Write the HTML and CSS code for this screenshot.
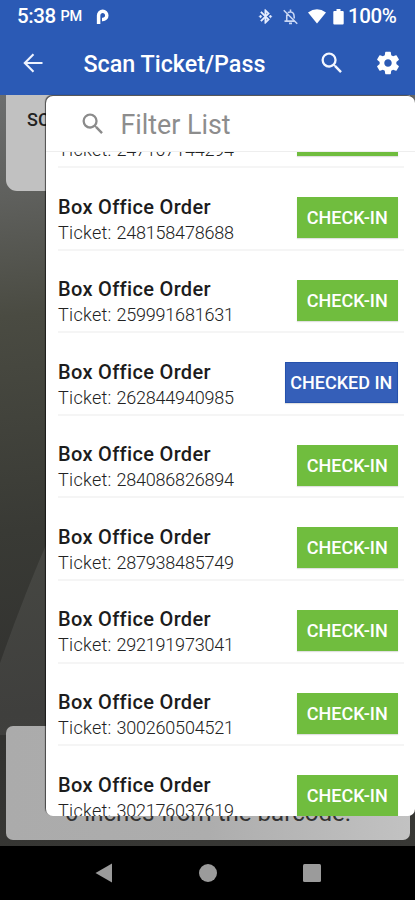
FILE: index.html
```html
<!DOCTYPE html>
<html lang="en">
<head>
<meta charset="utf-8">
<title>Scan Ticket/Pass</title>
<link rel="stylesheet" href="styles.css">
</head>
<body>
<div class="phone">
  <header class="top">
    <div class="status">
      <span class="time">5:38</span><span class="pm">PM</span>
      <svg class="parking" width="13" height="16" viewBox="0 0 13 16"><path d="M2.600 15V6.400a4.100 4.100 0 1 1 4.100 4.100H6" fill="none" stroke="#fff" stroke-width="3.500"/></svg>
      <span class="spacer"></span>
      <svg class="bt" width="17" height="17" viewBox="0 0 24 24" fill="#e6edff" stroke="#e6edff" stroke-width=".7"><path d="M17.710 7.710 12 2h-1v7.590L6.410 5 5 6.410 10.590 12 5 17.590 6.410 19 11 14.410V22h1l5.710-5.710-4.300-4.290 4.300-4.290zM13 5.830l1.880 1.880L13 9.590V5.830zm1.880 10.460L13 18.170v-3.760l1.880 1.880zM19 10l2 2-2 2-2-2zM5 10l2 2-2 2-2-2z"/></svg>
      <svg class="bell" width="19" height="18" viewBox="0 0 24 24" fill="none" stroke="#c9d7f5" stroke-width="2.100"><path d="M3 3l18 18M7 8.500V17M4 17.500h13M8.500 6.200C10 5 14 4.500 15.800 7.200 17 9 16.800 11 17 14M12 2v3M10 20.500h4"/></svg>
      <svg class="wifi" width="18" height="15" viewBox="0 0 18 15"><path d="M0 3.600Q9-3 18 3.600L9 14.500z" fill="#fff"/></svg>
      <svg class="battery" width="11" height="16" viewBox="0 0 11 16"><path d="M3.500 0h4v2h2.200q1 0 1 1v11.500q0 1-1 1H1.300q-1 0-1-1V3q0-1 1-1h2.200z" fill="#fff"/></svg>
      <span class="percent">100%</span>
    </div>
    <div class="appbar">
      <svg class="back" width="20" height="20" viewBox="0 0 20 20" fill="none" stroke="#eef3ff" stroke-width="2.100"><path d="M19.500 10H2M10.500 1.300 1.800 10l8.700 8.700"/></svg>
      <h1>Scan Ticket/Pass</h1>
      <svg class="find" width="28" height="28" viewBox="0 0 24 24" fill="#f4f7ff"><path d="M15.500 14h-.79l-.28-.27A6.471 6.471 0 0 0 16 9.500 6.500 6.500 0 1 0 9.500 16c1.610 0 3.090-.59 4.230-1.570l.27.28v.79l5 4.990L20.490 19l-4.990-5zm-6 0C7.010 14 5 11.990 5 9.500S7.010 5 9.500 5 14 7.010 14 9.500 11.990 14 9.500 14z"/></svg>
      <svg class="gear" width="28" height="28" viewBox="0 0 24 24" fill="#fff"><path d="M19.140 12.940c.04-.3.06-.61.06-.94 0-.32-.02-.64-.07-.94l2.030-1.580c.18-.14.23-.41.12-.61l-1.920-3.320c-.12-.22-.37-.29-.59-.22l-2.390.96c-.5-.38-1.030-.7-1.620-.94l-.36-2.540c-.04-.24-.24-.41-.48-.41h-3.840c-.24 0-.43.17-.47.41l-.36 2.540c-.59.24-1.130.57-1.620.94l-2.390-.96c-.22-.08-.47 0-.59.22L2.740 8.870c-.12.21-.08.47.12.61l2.030 1.580c-.05.3-.09.63-.09.94s.02.64.07.94l-2.030 1.580c-.18.14-.23.41-.12.61l1.920 3.320c.12.22.37.29.59.22l2.390-.96c.5.38 1.030.7 1.620.94l.36 2.540c.05.24.24.41.48.41h3.840c.24 0 .44-.17.47-.41l.36-2.540c.59-.24 1.130-.56 1.620-.94l2.390.96c.22.08.47 0 .59-.22l1.920-3.320c.12-.22.07-.47-.12-.61l-2.010-1.580zM12 15.200c-1.760 0-3.200-1.440-3.200-3.200s1.440-3.200 3.200-3.200 3.200 1.440 3.200 3.200-1.440 3.200-3.200 3.200z"/></svg>
    </div>
  </header>
  <main class="scanner">
    <svg class="ray" width="46" height="190" viewBox="0 0 46 190"><path d="M46 0C32 32 14 78 0 118v72h46z" fill="#fff" fill-opacity=".07"/></svg>
    <section class="card card-top">SC</section>
    <section class="card card-bottom">6 inches from the barcode.</section>
    <aside class="panel">
      <div class="filter">
        <svg width="28" height="28" viewBox="0 0 24 24" fill="#8b8b8b"><path d="M15.500 14h-.79l-.28-.27A6.471 6.471 0 0 0 16 9.500 6.500 6.500 0 1 0 9.500 16c1.610 0 3.090-.59 4.230-1.570l.27.28v.79l5 4.990L20.490 19l-4.990-5zm-6 0C7.010 14 5 11.990 5 9.500S7.010 5 9.500 5 14 7.010 14 9.500 11.990 14 9.500 14z"/></svg>
        <span>Filter List</span>
      </div>
      <div class="viewport">
        <ul class="orders">
          <li><div><b>Box Office Order</b><p>Ticket: <span>247107144294</span></p></div><button>CHECK-IN</button></li>
          <li><div><b>Box Office Order</b><p>Ticket: <span>248158478688</span></p></div><button>CHECK-IN</button></li>
          <li><div><b>Box Office Order</b><p>Ticket: <span>259991681631</span></p></div><button>CHECK-IN</button></li>
          <li><div><b>Box Office Order</b><p>Ticket: <span>262844940985</span></p></div><button class="done">CHECKED IN</button></li>
          <li><div><b>Box Office Order</b><p>Ticket: <span>284086826894</span></p></div><button>CHECK-IN</button></li>
          <li><div><b>Box Office Order</b><p>Ticket: <span>287938485749</span></p></div><button>CHECK-IN</button></li>
          <li><div><b>Box Office Order</b><p>Ticket: <span>292191973041</span></p></div><button>CHECK-IN</button></li>
          <li><div><b>Box Office Order</b><p>Ticket: <span>300260504521</span></p></div><button>CHECK-IN</button></li>
          <li><div><b>Box Office Order</b><p>Ticket: <span>302176037619</span></p></div><button>CHECK-IN</button></li>
        </ul>
      </div>
    </aside>
  </main>
  <nav class="nav">
    <svg width="18" height="20" viewBox="0 0 18 20"><path d="M17 .5v19L.5 10z" fill="#9b9b9b"/></svg>
    <svg width="18" height="18" viewBox="0 0 18 18"><circle cx="9" cy="9" r="9" fill="#9b9b9b"/></svg>
    <svg width="18" height="18" viewBox="0 0 18 18"><rect width="18" height="18" rx="1.500" fill="#9b9b9b"/></svg>
  </nav>
</div>
</body>
</html>
```
FILE: styles.css
```css
* { box-sizing: border-box; }
body, h1, p, ul { margin: 0; padding: 0; }
body { font-family: Roboto, "Liberation Sans", sans-serif; background: #000; }
svg { display: block; flex: none; }

.phone { width: 415px; height: 900px; display: flex; flex-direction: column; overflow: hidden; }

.top { height: 95px; background: #2b5ab5; color: #fff; }
.status { height: 33px; padding: 0 17px 0 17px; display: flex; align-items: center; font-size: 20.5px; font-weight: 500; line-height: 33px; }
.time { width: 40px; letter-spacing: -.4px; }
.pm { margin-left: 3.5px; font-size: 14.5px; line-height: 37px; letter-spacing: -.2px; width: 23px; }
.parking { margin-left: 12.5px; }
.spacer { flex: 1; }
.bt { margin-right: 1px; }
.bell { margin-left: 6px; }
.wifi { margin-left: 8px; }
.battery { margin-left: 7px; }
.percent { margin-left: 4px; width: 50px; letter-spacing: -.4px; }
.appbar { height: 62px; display: flex; align-items: center; padding: 0 13px 2px 23px; }
.appbar h1 { flex: 1; margin-left: 40.5px; font-size: 23.3px; font-weight: 500; line-height: 60px; padding-top: 2px; white-space: nowrap; }
.gear { margin-left: 28px; }

.scanner { position: relative; height: 751px; display: flex; flex-direction: column; justify-content: space-between; padding: 0 5px 6px 6px; background: linear-gradient(174deg, #6c6e6e 0%, #5f605d 13%, #4a4b42 28%, #393a35 55%, #31312f 78%, #383835 100%); }
.ray { position: absolute; left: 0; top: 450px; }
.card { position: relative; }
.card-top { height: 96px; border-radius: 0 0 11px 11px; background: #c1c1c1; padding: 13px 21px; font-size: 18px; font-weight: 500; line-height: 24px; color: #222; }
.card-bottom { height: 114px; border-radius: 7px; background: linear-gradient(90deg, #ababab, #adadad 50%, #c2c2c2); font-size: 24.1px; line-height: 28px; padding-top: 73px; text-align: center; white-space: nowrap; color: #333; }

.panel { position: absolute; left: 46px; top: 1px; width: 369px; height: 720px; display: flex; flex-direction: column; overflow: hidden; background: #fff; border-radius: 7px; box-shadow: -1px -1px 1px rgba(0, 0, 0, .6); }
.filter { height: 56px; padding: 2px 0 0 33px; display: flex; align-items: center; gap: 13.5px; font-size: 26.8px; color: #8d8d8d; border-bottom: 1px solid #eee; }
.filter svg { margin-top: -2px; }
.viewport { flex: 1; min-height: 0; overflow: hidden; }
.orders { list-style: none; margin-top: -66.3px; }
.orders li { height: 82.55px; margin: 0 11px 0 12px; padding: 29px 6px 0 0; display: flex; justify-content: space-between; align-items: flex-start; border-bottom: 2px solid #f5f5f5; }
.orders b { display: block; font-size: 20px; font-weight: 500; line-height: 24px; margin-top: -2.5px; color: #1c1c1c; letter-spacing: .33px; white-space: nowrap; }
.orders p { font-size: 18px; font-weight: 300; line-height: 22px; margin-top: 3px; color: #222; letter-spacing: .3px; white-space: nowrap; }
.orders p span { letter-spacing: -.2px; }
button { height: 41px; width: 101.5px; padding: 0; border: 0; background: #70bd3e; color: #fff; font: 500 18px/41px Roboto, "Liberation Sans", sans-serif; white-space: nowrap; box-shadow: 0 1px 1px rgba(0, 0, 0, .12); }
button.done { width: 113.5px; background: #355fb9; border: 1px solid #2551ac; line-height: 39px; }

.nav { height: 54px; background: #000; display: flex; justify-content: center; align-items: center; gap: 86px; padding-left: 1px; }
```
